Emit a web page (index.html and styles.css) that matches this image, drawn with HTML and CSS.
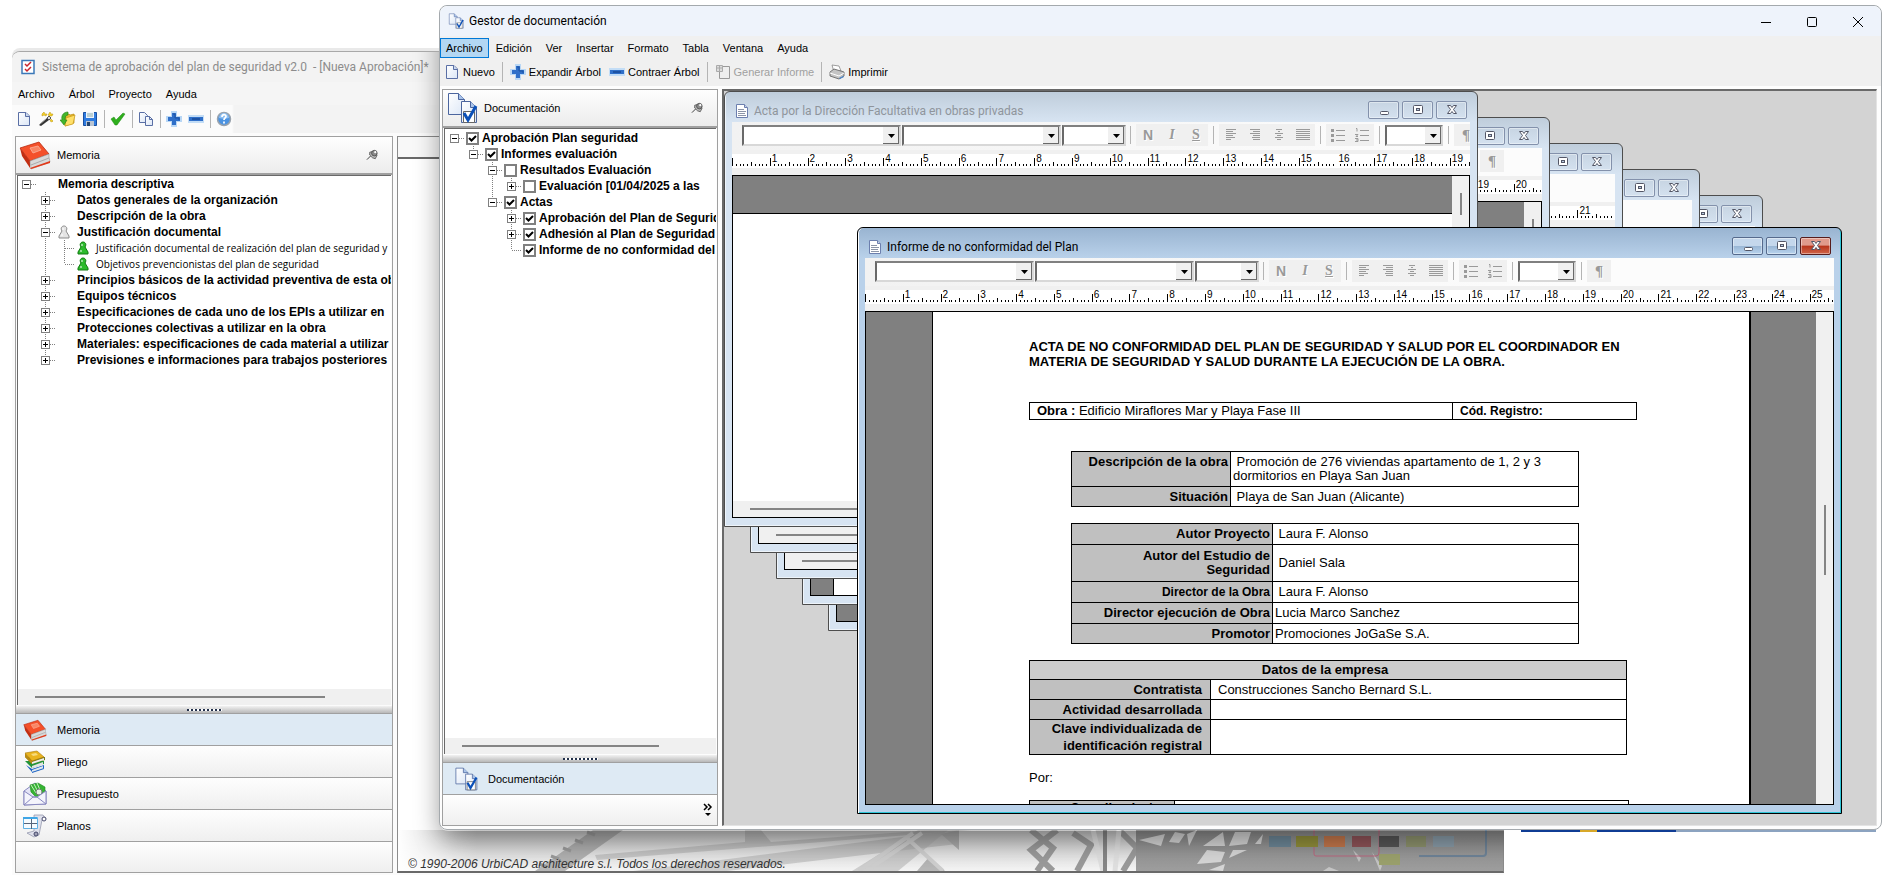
FILE: index.html
```
<!DOCTYPE html>
<html lang="es">
<head>
  <meta charset="UTF-8">
  <meta name="viewport" content="width=device-width, initial-scale=1.0">
  <title>Gestor de documentación</title>
  <link rel="stylesheet" href="styles.css">
</head>
<body>
  <svg class="sprite" aria-hidden="true">
    <defs>
      <linearGradient id="paper" x1="0" y1="0" x2="1" y2="1"><stop offset="0" stop-color="#fff"/><stop offset="1" stop-color="#dbe6f6"/></linearGradient>
      <linearGradient id="fade" x1="0" y1="0" x2="0" y2="1"><stop offset="0" stop-color="#c4c4c4"/><stop offset="1" stop-color="#f4f4f4"/></linearGradient>
      <linearGradient id="side" x1="0" y1="0" x2="1" y2="0"><stop offset="0" stop-color="#fff"/><stop offset="1" stop-color="#fff" stop-opacity="0"/></linearGradient>
      <linearGradient id="dark" x1="0" y1="0" x2="0" y2="1"><stop offset="0" stop-color="#8a8a8a"/><stop offset="1" stop-color="#9d9d9d"/></linearGradient>
    </defs>
    <symbol id="i-new" viewBox="0 0 16 16"><path d="M2.500 1.500h7.500l3.500 3.500v9.500h-11z" fill="url(#paper)" stroke="#5a6fa5"/><path d="M9.500 1.500v4h4" fill="#c9d8f0" stroke="#5a6fa5"/></symbol>
    <symbol id="i-wand" viewBox="0 0 16 16"><path d="M1 14l8-7 2 2-8 6z" fill="#333"/><path d="M2 13l6-5" stroke="#999"/><path d="M9 7l2-2 2 2-2 2z" fill="#ddd" stroke="#555"/><path d="M6 1l1 2 2 0-1 2-2-1-2 1 0-2zM12 1l1 2 2 0-1 2-2 0-2-1zM13 8l1 1 1 1-1 1-2-1z" fill="#f5d32a" stroke="#b98f0c" stroke-width=".5"/></symbol>
    <symbol id="i-open" viewBox="0 0 16 16"><path d="M5 4l4-1 1 1 4-1v9l-9 3z" fill="#e9b92c" stroke="#b98a10" stroke-width=".7"/><path d="M6 7l9-3-2 9-8 2z" fill="#ffe06a" stroke="#c79a1b" stroke-width=".7"/><path d="M8 1C3 1 1 5 2 9L0 9l4 5 3-5H5C5 6 6 4 8 4z" fill="#43b52b" stroke="#23810f" stroke-width=".6"/></symbol>
    <symbol id="i-save" viewBox="0 0 16 16"><path d="M1.500 1.500h13v13h-13z" fill="#2e7be0" stroke="#1a4fa0"/><path d="M4 1h8v6H4z" fill="#eef4fc"/><path d="M5 3h6M5 5h6" stroke="#8aa"/><path d="M4 10h8v5H4z" fill="#b9c4d2"/><path d="M5 11h3v4H5z" fill="#24446f"/></symbol>
    <symbol id="i-ok" viewBox="0 0 16 16"><path d="M1 8l3-2 2 3 7-7 2 1-8 11H5z" fill="#2fae1e" stroke="#1d8a10" stroke-width=".5"/></symbol>
    <symbol id="i-copy" viewBox="0 0 16 16"><path d="M1.500 1.500h5l3 3v7h-8z" fill="url(#paper)" stroke="#5a6fa5"/><path d="M7.500 5.500h4l3 3v6h-7z" fill="url(#paper)" stroke="#5a6fa5"/><path d="M11.500 5.500v3h3" fill="none" stroke="#5a6fa5"/></symbol>
    <symbol id="i-plus" viewBox="0 0 16 16"><path d="M5 0h6v5h5v6h-5v5H5v-5H0V5h5z" fill="#b9d7f5"/><path d="M6 2h4v4h4v4h-4v4H6v-4H2V6h4z" fill="#2f6fc9"/><path d="M7 3h2v4h4v2" fill="none" stroke="#1d52a3"/></symbol>
    <symbol id="i-minus" viewBox="0 0 16 16"><path d="M0 4h16v8H0z" fill="#c3ddf6"/><path d="M1 6h14v4H1z" fill="#2f6fc9"/><path d="M4 8h8" stroke="#1d52a3" stroke-width="2"/></symbol>
    <symbol id="i-help" viewBox="0 0 16 16"><circle cx="8" cy="8" r="6.500" fill="#4b93e2" stroke="#9aa3ad" stroke-width="1.500"/><path d="M3 7a5 5 0 0 1 10 0c-3 1-7 1-10 0z" fill="#8fc0f2"/><path d="M6 6c0-3 4-3 4-.6C10 7 8 7 8 9M8 10.500v2" stroke="#fff" stroke-width="1.700" fill="none"/></symbol>
    <symbol id="i-app" viewBox="0 0 16 16"><path d="M2 1.500h12v13H2z" fill="#fff" stroke="#3b78b8" stroke-width="1.500"/><path d="M5 5l2 2 4-4M5 10l2 2 4-4" stroke="#c9252b" stroke-width="1.500" fill="none"/></symbol>
    <symbol id="i-docs" viewBox="0 0 32 32"><path d="M2.500 1.500h10l6 6v15h-16z" fill="url(#paper)" stroke="#4b659e"/><path d="M12.500 1.500v6h6" fill="#aac4ea" stroke="#4b659e"/><path d="M15.500 9.500h9l6 6v15h-15z" fill="url(#paper)" stroke="#4b659e"/><path d="M24.500 9.500v6h6" fill="#aac4ea" stroke="#4b659e"/><path d="M17.500 19.500h11v11h-11z" fill="#fff" stroke="#666"/><path d="M18 21l4 7 8-14" fill="none" stroke="#0b50b8" stroke-width="3"/></symbol>
    <symbol id="i-book" viewBox="0 0 32 32"><path d="M1 9l19-6 10 12-19 7z" fill="#f4502a" stroke="#b82a10" stroke-width=".8"/><path d="M1 9l10 13v7L3 17z" fill="#c22e12"/><path d="M11 22l19-7v3l1 5-19 7z" fill="#d9d9d9" stroke="#999" stroke-width=".6"/><path d="M12 26l18-7" stroke="#aaa"/><path d="M11 29l20-7v2l-19 6z" fill="#e23a1a"/><path d="M11 9l8-2 3 4-8 3z" fill="#f98564" stroke="#fbb19c" stroke-width=".8"/></symbol>
    <symbol id="i-books" viewBox="0 0 24 24"><path d="M3 15l6 7 12-4v-3L9 19z" fill="#1b63c4"/><path d="M9 20l11-4v3L9 22z" fill="#dfe6ee"/><path d="M9 22l12-4v1L9 23z" fill="#1b63c4"/><path d="M2 11l7 7 12-4v-3z" fill="#23943a"/><path d="M9 16l11-4v3L9 18z" fill="#e4e4e4"/><path d="M2 7l7 7 13-4V7z" fill="#7d7a1c"/><path d="M9 12l12-4v2L9 14z" fill="#eee"/><path d="M2 3l12-2 7 6-12 4z" fill="#eab41f" stroke="#a97a0a" stroke-width=".6"/><path d="M2 3l7 8v3L2 7z" fill="#b98a10"/><path d="M8 4l5-1 2 2-5 1z" fill="#f8dc7c"/></symbol>
    <symbol id="i-mail" viewBox="0 0 24 24"><path d="M1 9l11-8 11 8v13L1 23z" fill="#e4e4f6" stroke="#8888c0"/><path d="M7 3l8-2 7 4v6l-8 5-6-6z" fill="#35b332" stroke="#1c8a1c" stroke-width=".6"/><path d="M8 3l5 8M11 2l4 8M14 1l3 7" stroke="#c9f0c4"/><circle cx="16" cy="10" r="3" fill="#e8f5e6" stroke="#777"/><path d="M1 9l9 6h4l9-6v13L1 23z" fill="#f4f4fc" stroke="#8888c0"/><path d="M1 23l9-8h4l9 7" stroke="#8888c0" fill="none"/></symbol>
    <symbol id="i-plan" viewBox="0 0 24 24"><path d="M11 1l9 0 3 4-4 1-3 15-5 2-7-4 7-2z" fill="#dfe1ec" stroke="#8d90a8" stroke-width=".7"/><path d="M.5 3.500h14v11H.5z" fill="#f5fbff" stroke="#5fb0e4"/><path d="M0 3h14v2H0z" fill="#3fa6e6"/><path d="M8.500 5v10M1 9.500h13M6 9.500h5" stroke="#56657a"/><circle cx="21" cy="5" r="2" fill="#fff" stroke="#44476a"/><circle cx="13" cy="20" r="2" fill="#9ea0b5" stroke="#44476a"/></symbol>
    <symbol id="i-pin" viewBox="0 0 14 12"><path d="M1 11l4-4" stroke="#333"/><path d="M4 3l4-1 4 4-2 4-3-1-3-3z" fill="#bbb" stroke="#444" stroke-width=".8"/><circle cx="9" cy="4" r="3" fill="#8c8c8c" stroke="#444" stroke-width=".8"/><circle cx="10" cy="3" r="1.200" fill="#fff"/></symbol>
    <symbol id="i-pawn" viewBox="0 0 12 14"><path d="M4 6C2 3 4 1 6 1s4 2 2 5l3 5v2H1v-2z" fill="var(--pawn)" stroke="var(--edge)" stroke-width="1"/><path d="M5 3v2M4 9v2" stroke="#fff"/></symbol>
    <symbol id="i-report" viewBox="0 0 16 16"><path d="M4.500 2.500h10v12h-10z" fill="#eee" stroke="#999"/><path d="M1.500 1.500h6v6h-6z" fill="#ddd" stroke="#aaa"/><path d="M2 4h5M4.500 2v5" stroke="#aaa"/></symbol>
    <symbol id="i-print" viewBox="0 0 16 16"><path d="M3 1l7 1 2 5-7 1z" fill="#fff" stroke="#888" stroke-width=".8"/><path d="M1 8l4-3 10 3v4l-5 3-9-3z" fill="#c4c4c4" stroke="#5a5a5a" stroke-width=".8"/><path d="M1 9l9 3 5-3" fill="none" stroke="#fff"/><path d="M10 14l4-2 1 1-4 2z" fill="#4d86c9"/></symbol>
    <symbol id="i-page" viewBox="0 0 14 16"><path d="M1.500 1.500h8l3 3v10h-11z" fill="#fff" stroke="#6c7fae"/><path d="M9.500 1.500v3h3" fill="#c9d4ea" stroke="#6c7fae"/><path d="M3 6.500h6M3 8.500h8M3 10.500h7M3 12.500h8" stroke="#8c95a8"/></symbol>
    <symbol id="i-left" viewBox="0 0 14 14"><path d="M2 1.500h10M2 3.500h7M2 5.500h10M2 7.500h7M2 9.500h9M2 11.500h5" stroke="#9a9a9a"/></symbol>
    <symbol id="i-right" viewBox="0 0 14 14"><path d="M2 1.500h10M5 3.500h7M2 5.500h10M5 7.500h7M4 9.500h8M5 11.500h7" stroke="#9a9a9a"/></symbol>
    <symbol id="i-center" viewBox="0 0 14 14"><path d="M4 1.500h6M6 3.500h2M3 5.500h8M5 7.500h4M3 9.500h8M5 11.500h4" stroke="#9a9a9a"/></symbol>
    <symbol id="i-full" viewBox="0 0 14 14"><path d="M0 1.500h14M0 3.500h14M0 5.500h14M0 7.500h14M0 9.500h14M0 11.500h14" stroke="#9a9a9a"/></symbol>
    <symbol id="i-bullets" viewBox="0 0 14 14"><path d="M0 1h3v3H0zM0 6h3v3H0zM0 11h3v3H0z" fill="#9a9a9a"/><path d="M5 2.500h9M5 7.500h9M5 12.500h9" stroke="#9a9a9a"/></symbol>
    <symbol id="i-numbers" viewBox="0 0 14 14"><path d="M1 .5h1v3M0 6.500h3l-2 2h2M0 10.500h3v3H0M1 12h2" fill="none" stroke="#9a9a9a"/><path d="M5 2.500h9M5 7.500h9M5 12.500h9" stroke="#9a9a9a"/></symbol>
    <symbol id="i-min" viewBox="0 0 12 12"><rect x="2.500" y="7.500" width="8" height="3" rx="1" fill="#fff" stroke="#535666"/></symbol>
    <symbol id="i-max" viewBox="0 0 12 12"><rect x="1.500" y="1.500" width="9" height="8" rx="1" fill="#fff" stroke="#535666"/><rect x="4.500" y="4.500" width="3" height="2" fill="#b9cbe0" stroke="#535666"/></symbol>
    <symbol id="i-close" viewBox="0 0 12 12"><path d="M1.500 1.500h3l1.500 2 1.500-2h3l-3 4 3 4h-3l-1.500-2-1.500 2h-3l3-4z" fill="#fff" stroke="#535666"/></symbol>
  </svg>

  <!-- main application -->
  <section class="app-window" aria-label="Sistema de aprobación">
    <header class="app-title">
      <svg class="icon"><use href="#i-app"/></svg>
      <span>Sistema de aprobación del plan de seguridad v2.0 &nbsp;- [Nueva Aprobación]*</span>
    </header>
    <nav class="menu app-menu">
      <button>Archivo</button><button>Árbol</button><button>Proyecto</button><button>Ayuda</button>
    </nav>
    <div class="tools app-tools">
      <button aria-label="Nuevo"><svg class="icon"><use href="#i-new"/></svg></button>
      <button aria-label="Asistente"><svg class="icon"><use href="#i-wand"/></svg></button>
      <button aria-label="Abrir"><svg class="icon"><use href="#i-open"/></svg></button>
      <button aria-label="Guardar"><svg class="icon"><use href="#i-save"/></svg></button>
      <i class="sep"></i>
      <button aria-label="Validar"><svg class="icon"><use href="#i-ok"/></svg></button>
      <i class="sep"></i>
      <button aria-label="Copiar"><svg class="icon"><use href="#i-copy"/></svg></button>
      <i class="sep"></i>
      <button aria-label="Expandir"><svg class="icon"><use href="#i-plus"/></svg></button>
      <button aria-label="Contraer"><svg class="icon"><use href="#i-minus"/></svg></button>
      <i class="sep"></i>
      <button aria-label="Ayuda"><svg class="icon"><use href="#i-help"/></svg></button>
    </div>
    <div class="app-body">
      <aside class="panel app-panel">
        <div class="panel-head">
          <svg class="icon-big"><use href="#i-book"/></svg><span>Memoria</span>
          <button class="pin" aria-label="Fijar"><svg><use href="#i-pin"/></svg></button>
        </div>
        <div class="tree-box">
          <ul class="tree tree-memo">
            <li><div class="row bold"><button class="exp open" aria-label="Contraer"></button><i class="dots"></i><i class="slot"></i>Memoria descriptiva</div>
              <ul>
                <li><div class="row bold"><button class="exp" aria-label="Expandir"></button><i class="dots"></i><i class="slot"></i>Datos generales de la organización</div></li>
                <li><div class="row bold"><button class="exp" aria-label="Expandir"></button><i class="dots"></i><i class="slot"></i>Descripción de la obra</div></li>
                <li><div class="row bold"><button class="exp open" aria-label="Contraer"></button><i class="dots"></i><i class="slot"><svg class="pawn"><use href="#i-pawn"/></svg></i>Justificación documental</div>
                  <ul>
                    <li><div class="row leaf-row"><i class="leaf"></i><i class="slot"><svg class="pawn green"><use href="#i-pawn"/></svg></i>Justificación documental de realización del plan de seguridad y</div></li>
                    <li><div class="row leaf-row"><i class="leaf"></i><i class="slot"><svg class="pawn green"><use href="#i-pawn"/></svg></i>Objetivos prevencionistas del plan de seguridad</div></li>
                  </ul>
                </li>
                <li><div class="row bold"><button class="exp" aria-label="Expandir"></button><i class="dots"></i><i class="slot"></i>Principios básicos de la actividad preventiva de esta obra</div></li>
                <li><div class="row bold"><button class="exp" aria-label="Expandir"></button><i class="dots"></i><i class="slot"></i>Equipos técnicos</div></li>
                <li><div class="row bold"><button class="exp" aria-label="Expandir"></button><i class="dots"></i><i class="slot"></i>Especificaciones de cada uno de los EPIs a utilizar en</div></li>
                <li><div class="row bold"><button class="exp" aria-label="Expandir"></button><i class="dots"></i><i class="slot"></i>Protecciones colectivas a utilizar en la obra</div></li>
                <li><div class="row bold"><button class="exp" aria-label="Expandir"></button><i class="dots"></i><i class="slot"></i>Materiales: especificaciones de cada material a utilizar</div></li>
                <li><div class="row bold"><button class="exp" aria-label="Expandir"></button><i class="dots"></i><i class="slot"></i>Previsiones e informaciones para trabajos posteriores</div></li>
              </ul>
            </li>
          </ul>
          <div class="hscroll"><i class="thumb-memo"></i></div>
        </div>
        <div class="splitter"><i></i></div>
        <button class="stack-item current"><svg class="icon-mid"><use href="#i-book"/></svg>Memoria</button>
        <button class="stack-item"><svg class="icon-mid"><use href="#i-books"/></svg>Pliego</button>
        <button class="stack-item"><svg class="icon-mid"><use href="#i-mail"/></svg>Presupuesto</button>
        <button class="stack-item"><svg class="icon-mid"><use href="#i-plan"/></svg>Planos</button>
        <div class="stack-foot"></div>
      </aside>
      <main class="canvas">
        <div class="canvas-head"></div>
        <div class="canvas-photo">
          <svg class="bridge" viewBox="0 0 1106 41" preserveAspectRatio="xMaxYMin slice" aria-hidden="true">
            <rect width="1106" height="41" fill="url(#fade)"/>
            <g fill="#8f8f8f" opacity=".6">
              <path d="M138 41L196 0h30L168 41z"/>
              <path d="M348 0h16l10 12 160-12h40L200 30l-2-5 150-13z" opacity=".6"/>
              <path d="M236 41L560 0v14L330 41z" opacity=".6"/>
              <path d="M455 41l66-41h30l-50 41z" opacity=".6"/>
              <path d="M520 41l12-14 16 14zM544 4l18-4v20z"/>
            </g>
            <path d="M142 34l8 3m4-11l8 3m4-11l8 3m4-11l8 3m4-11l8 3" stroke="#999" stroke-width="3"/>
            <path d="M462 41l54-38M510 8l36 33M475 37l50-34" stroke="#cdcdcd" stroke-width="4"/>
            <g stroke="#999" stroke-width="6" fill="none"><path d="M634 0l22 18-16 23M660 0l-26 20 22 21M676 3l18 12-14 26M722 0l18 18-14 23"/></g>
            <path d="M696 0l10 41M722 0l-4 41" stroke="#dedede" stroke-width="5"/>
            <path d="M708 0v41" stroke="#858585" stroke-width="4"/>
            <path d="M739 0h367v41H739z" fill="url(#dark)"/>
            <g fill="#dcdcdc" opacity=".9">
              <path d="M742 10l26-6-4 12zM772 12l6-10 10 2-6 9zM790 4l10-4-8 16zM806 16l20-14 2 14zM832 16l6-14 16 0-4 12zM800 34l10-14 18 2-4 10zM832 28l4-8h14zM812 40l16-6-2 7zM858 14l8-10-2 10z"/>
              <path d="M926 41l6-4 10 4zM956 20l8 8-2 4zM975 22l10 14-2 5z" opacity=".7"/>
            </g>
            <path d="M917 0v24q0 2 2 2h60q3 0 3-3V0" fill="none" stroke="#b7657c"/>
            <path d="M1022 26h64q3 0 3-3V0" fill="none" stroke="#6d8296" stroke-width="2"/>
            <path d="M872 6h22v11h-22z" fill="#6b8595"/><path d="M899 6h22v11h-22z" fill="#8f8d3a"/>
            <path d="M927 6h21v11h-21z" fill="#c1754a"/><path d="M955 6h19v11h-19z" fill="#8d5257"/>
            <path d="M982 6h20v11h-20z" fill="#555"/><path d="M1009 6h20v11h-20z" fill="#8b906b"/>
            <path d="M1036 6h21v11h-21z" fill="#8799a5"/><path d="M982 24h21v11h-21z" fill="#9aa06c"/>
            <rect width="80" height="41" fill="url(#side)"/>
          </svg>
          <p class="copyright">© 1990-2006 UrbiCAD architecture s.l. Todos los derechos reservados.</p>
        </div>
      </main>
    </div>
    <i class="shade"></i>
  </section>
  <i class="desk-strip"></i>

  <!-- document manager -->
  <section class="manager" aria-label="Gestor de documentación">
    <header class="manager-title">
      <svg class="icon"><use href="#i-docs"/></svg>
      <h1>Gestor de documentación</h1>
      <div class="win-buttons">
        <button aria-label="Minimizar"><svg viewBox="0 0 12 12"><path d="M1 6.500h10"/></svg></button>
        <button aria-label="Maximizar"><svg viewBox="0 0 12 12"><rect x="1.500" y="1.500" width="9" height="9" rx="1"/></svg></button>
        <button aria-label="Cerrar"><svg viewBox="0 0 12 12"><path d="M1 1l10 10M11 1L1 11"/></svg></button>
      </div>
    </header>
    <nav class="menu manager-menu">
      <button class="selected">Archivo</button><button>Edición</button><button>Ver</button><button>Insertar</button><button>Formato</button><button>Tabla</button><button>Ventana</button><button>Ayuda</button>
    </nav>
    <div class="tools manager-tools">
      <button><svg class="icon"><use href="#i-new"/></svg>Nuevo</button>
      <i class="sep"></i>
      <button><svg class="icon"><use href="#i-plus"/></svg>Expandir Árbol</button>
      <button><svg class="icon"><use href="#i-minus"/></svg>Contraer Árbol</button>
      <i class="sep"></i>
      <button disabled><svg class="icon"><use href="#i-report"/></svg>Generar Informe</button>
      <i class="sep"></i>
      <button><svg class="icon"><use href="#i-print"/></svg>Imprimir</button>
    </div>
    <div class="manager-body">
      <aside class="panel manager-panel">
        <div class="panel-head">
          <svg class="icon-big"><use href="#i-docs"/></svg><span>Documentación</span>
          <button class="pin" aria-label="Fijar"><svg><use href="#i-pin"/></svg></button>
        </div>
        <div class="tree-box">
          <ul class="tree tree-docs">
            <li><div class="row bold"><button class="exp open" aria-label="Contraer"></button><i class="dots"></i><label><input type="checkbox" checked>Aprobación Plan seguridad</label></div>
              <ul>
                <li><div class="row bold"><button class="exp open" aria-label="Contraer"></button><i class="dots"></i><label><input type="checkbox" checked>Informes evaluación</label></div>
                  <ul>
                    <li><div class="row bold"><button class="exp open" aria-label="Contraer"></button><i class="dots"></i><label><input type="checkbox">Resultados Evaluación</label></div>
                      <ul>
                        <li><div class="row bold"><button class="exp" aria-label="Expandir"></button><i class="dots"></i><label><input type="checkbox">Evaluación [01/04/2025 a las</label></div></li>
                      </ul>
                    </li>
                    <li><div class="row bold"><button class="exp open" aria-label="Contraer"></button><i class="dots"></i><label><input type="checkbox" checked>Actas</label></div>
                      <ul>
                        <li><div class="row bold"><button class="exp" aria-label="Expandir"></button><i class="dots"></i><label><input type="checkbox" checked>Aprobación del Plan de Seguridad</label></div></li>
                        <li><div class="row bold"><button class="exp" aria-label="Expandir"></button><i class="dots"></i><label><input type="checkbox" checked>Adhesión al Plan de Seguridad</label></div></li>
                        <li><div class="row bold"><i class="leaf"></i><label><input type="checkbox" checked>Informe de no conformidad del</label></div></li>
                      </ul>
                    </li>
                  </ul>
                </li>
              </ul>
            </li>
          </ul>
          <div class="hscroll"><i class="thumb-docs"></i></div>
        </div>
        <div class="splitter"><i></i></div>
        <button class="stack-item current"><svg class="icon-mid"><use href="#i-docs"/></svg>Documentación</button>
        <div class="stack-foot"><button class="more" aria-label="Más"><svg viewBox="0 0 10 14"><path d="M1 1l3 3-3 3M5 1l3 3-3 3" fill="none" stroke="#000" stroke-width="1.500"/><path d="M2 10h6l-3 3z"/></svg></button></div>
      </aside>

      <div class="mdi">
        <article class="child child-5">
          <header class="child-title"></header>
          <div class="format-bar"></div>
          <div class="doc"><div class="doc-gray"></div></div>
        </article>
        <article class="child child-4">
          <header class="child-title"></header>
          <div class="format-bar"></div>
          <div class="doc"><div class="margin-thin"></div><div class="doc-white"></div></div>
        </article>
        <article class="child child-3">
          <header class="child-title"></header>
          <div class="format-bar"></div>
          <div class="ruler" data-from="21" data-to="21"></div>
          <div class="doc"><div class="doc-view"><div class="doc-band"></div><div class="doc-white"></div><div class="hscroll"><i></i></div></div><div class="vscroll"><i></i></div></div>
        </article>
        <article class="child child-2">
          <header class="child-title"></header>
          <div class="format-bar has-marks"></div>
          <div class="ruler" data-from="19" data-to="20"></div>
          <div class="doc"><div class="doc-view"><div class="doc-band"></div><div class="doc-white"></div><div class="hscroll"><i></i></div></div><div class="vscroll"><i></i></div></div>
        </article>
        <article class="child child-1">
          <header class="child-title"><svg class="icon-page"><use href="#i-page"/></svg><span>Acta por la Dirección Facultativa en obras privadas</span></header>
          <div class="format-bar has-marks"></div>
          <div class="ruler" data-from="1" data-to="19"></div>
          <div class="doc"><div class="doc-view"><div class="doc-band"></div><div class="doc-white"></div><div class="hscroll"><i></i></div></div><div class="vscroll"><i></i></div></div>
        </article>

        <article class="child child-active">
          <header class="child-title"><svg class="icon-page"><use href="#i-page"/></svg><span>Informe de no conformidad del Plan</span></header>
          <div class="format-bar has-marks"></div>
          <div class="ruler" data-from="1" data-to="25"></div>
          <div class="doc">
            <div class="margin-left"></div>
            <div class="page">
              <h2>ACTA DE NO CONFORMIDAD DEL PLAN DE SEGURIDAD Y SALUD POR EL COORDINADOR EN<br>MATERIA DE SEGURIDAD Y SALUD DURANTE LA EJECUCIÓN DE LA OBRA.</h2>
              <table class="t-obra">
                <tr><td><b>Obra :</b> Edificio Miraflores Mar y Playa Fase III</td><td class="reg"><b>Cód. Registro:</b></td></tr>
              </table>
              <table class="t-desc">
                <tr class="tall"><th>Descripción de la obra</th><td>&nbsp;Promoción de 276 viviendas apartamento de 1, 2 y 3<br>dormitorios en Playa San Juan</td></tr>
                <tr><th>Situación</th><td>&nbsp;Playa de San Juan (Alicante)</td></tr>
              </table>
              <table class="t-autor">
                <tr><th>Autor Proyecto</th><td>&nbsp;Laura F. Alonso</td></tr>
                <tr class="tall"><th>Autor del Estudio de<br>Seguridad</th><td>&nbsp;Daniel Sala</td></tr>
                <tr><th class="small">Director de la Obra</th><td>&nbsp;Laura F. Alonso</td></tr>
                <tr><th>Director ejecución de Obra</th><td>Lucia Marco Sanchez</td></tr>
                <tr class="last"><th>Promotor</th><td>Promociones JoGaSe S.A.</td></tr>
              </table>
              <table class="t-empresa">
                <colgroup><col class="names"><col></colgroup>
                <tr class="first"><th colspan="2" class="caption">Datos de la empresa</th></tr>
                <tr><th>Contratista</th><td>Construcciones Sancho Bernard S.L.</td></tr>
                <tr><th>Actividad desarrollada</th><td></td></tr>
                <tr class="tall"><th>Clave individualizada de<br>identificación registral</th><td></td></tr>
              </table>
              <p>Por:</p>
              <table class="t-firma">
                <tr><th>Coordinador/a</th><td></td></tr>
              </table>
            </div>
            <div class="margin-right"></div>
            <div class="vscroll"><i></i></div>
          </div>
        </article>
      </div>
    </div>
  </section>

  <template id="formatBar">
    <select class="wide" aria-label="Estilo"></select>
    <select class="wide" aria-label="Fuente"></select>
    <select class="narrow" aria-label="Tamaño"></select>
    <i class="sep"></i>
    <div class="group"><button class="n" aria-label="Negrita">N</button><button class="k" aria-label="Cursiva">I</button><button class="s" aria-label="Subrayado">S</button></div>
    <i class="sep"></i>
    <div class="group">
      <button aria-label="Izquierda"><svg><use href="#i-left"/></svg></button>
      <button aria-label="Derecha"><svg><use href="#i-right"/></svg></button>
      <button aria-label="Centrar"><svg><use href="#i-center"/></svg></button>
      <button aria-label="Justificar"><svg><use href="#i-full"/></svg></button>
    </div>
    <i class="sep"></i>
    <div class="group">
      <button aria-label="Viñetas"><svg><use href="#i-bullets"/></svg></button>
      <button aria-label="Numeración"><svg><use href="#i-numbers"/></svg></button>
    </div>
    <i class="sep"></i>
    <select class="zoom" aria-label="Zoom"></select>
    <i class="sep"></i>
    <div class="group"><button class="p" aria-label="Marcas de párrafo">¶</button></div>
  </template>
  <template id="childButtons">
    <div class="child-buttons">
      <button aria-label="Minimizar"><svg><use href="#i-min"/></svg></button>
      <button aria-label="Maximizar"><svg><use href="#i-max"/></svg></button>
      <button class="x" aria-label="Cerrar"><svg><use href="#i-close"/></svg></button>
    </div>
  </template>
  <script src="script.js"></script>
</body>
</html>
```
FILE: styles.css
```
* {
  box-sizing: border-box;
}

html, body {
  height: 100%;
}

body {
  margin: 0;
  position: relative;
  overflow: hidden;
  background: #fff;
  color: #000;
  font: 11px/16px "Liberation Sans", Arial, sans-serif;
}

button {
  font: inherit;
  color: inherit;
  background: none;
  border: 0;
  padding: 0;
  white-space: nowrap;
}

ul {
  list-style: none;
  margin: 0;
  padding: 0;
}

.sprite { position: absolute; width: 0; height: 0; }
.icon { width: 16px; height: 16px; flex: none; }
.icon-mid { width: 24px; height: 24px; flex: none; }
.icon-big { width: 32px; height: 32px; flex: none; }
.icon-page { width: 14px; height: 16px; flex: none; }

/* ---- main application ---- */
.app-window {
  position: absolute;
  inset: 51px 382px 3px 12px;
  display: flex;
  flex-direction: column;
  overflow: hidden;
  background: #fbfbfb;
  border-top: 1px solid #a8a8a8;
  border-radius: 8px 0 0 0;
  box-shadow: 0 -3px 0 #e9e9e9;
}

/* shadow that the manager window throws on the application */
.shade {
  position: absolute;
  inset: -40px -100px 44px 428px;
  border-radius: 8px;
  box-shadow: 0 8px 26px rgba(0,0,0,0.4);
}

.app-title {
  display: flex;
  align-items: center;
  gap: 6px;
  height: 30px;
  padding-left: 8px;
  background: #f3f3f3;
  border-radius: 8px 0 0 0;
  color: #8c8c8c;
  font: 12px/16px Roboto, sans-serif;
}

.menu {
  display: flex;
  align-items: center;
}
.menu button {
  height: 20px;
  padding: 0 6px;
  border: 1px solid transparent;
}
.menu .selected {
  background: #b3d7f3;
  border-color: #0078d7;
  padding: 0 5px;
}

.app-menu {
  height: 23px;
  background: #f5f5f5;
}
.app-menu button:first-child { padding-left: 5px; }

.tools {
  display: flex;
  align-items: center;
}
.tools button {
  display: flex;
  align-items: center;
  gap: 3px;
}
.tools button:disabled { color: #a0a0a0; }

.sep {
  flex: none;
  width: 1px;
  height: 18px;
  margin: 0 5px;
  background: #b4b4b4;
}

.app-tools {
  gap: 6px;
  height: 28px;
  padding: 0 0 1px 4px;
  background: linear-gradient(90deg, #fbfbfb 220px, #f3f3f3 222px);
}
.app-tools .sep { margin: 0 -1px 0 0; }

.app-body {
  flex: 1;
  display: flex;
  gap: 4px;
  min-height: 0;
  padding: 3px 0 2px 3px;
}

.panel {
  display: flex;
  flex-direction: column;
  flex: none;
  border: 1px solid #a0a0a0;
}
.app-panel { width: 378px; }

.panel-head {
  display: flex;
  align-items: center;
  gap: 6px;
  height: 38px;
  padding: 0 13px 0 3px;
  background: linear-gradient(#fefefe, #ececec);
  border-bottom: 2px solid #a0a0a0;
}
.pin { margin-left: auto; }
.pin svg { display: block; width: 13px; height: 12px; }

.tree-box {
  flex: 1;
  display: flex;
  flex-direction: column;
  min-height: 0;
  margin: 0 1px 1px;
  background: #fff;
  border-left: 1px solid #696969;
  border-top: 1px solid #696969;
}
.tree {
  flex: 1;
  min-height: 0;
  overflow: hidden;
  white-space: nowrap;
}
.tree-memo { padding-left: 4px; }
.tree-docs { padding: 1px 0 0 5px; }

.tree ul { padding-left: 19px; }

/* dotted guide running down through the siblings */
.tree li li {
  background: repeating-linear-gradient(#808080 0 1px, transparent 1px 2px) 4px 0 / 1px 100% no-repeat;
}
.tree li li:last-child { background-size: 1px 8px; }

.row {
  display: flex;
  align-items: center;
  height: 16px;
}
.bold { font-weight: bold; font-size: 12px; }
.leaf-row { font-family: "Open Sans", sans-serif; font-size: 10px; }

.exp {
  flex: none;
  width: 9px;
  height: 9px;
  border: 1px solid #808080;
  background:
    linear-gradient(#000, #000) 1px 3px / 5px 1px no-repeat,
    linear-gradient(#000, #000) 3px 1px / 1px 5px no-repeat,
    #fff;
}
.exp.open {
  background: linear-gradient(#000, #000) 1px 3px / 5px 1px no-repeat, #fff;
}

.dots, .leaf {
  flex: none;
  height: 1px;
  background: repeating-linear-gradient(90deg, #808080 0 1px, transparent 1px 2px);
}
.dots { width: 6px; margin-right: 2px; }
.leaf { width: 10px; margin: 0 2px 0 5px; }

.slot {
  display: flex;
  flex: none;
  width: 19px;
}
.pawn {
  --pawn: #e4e4e4;
  --edge: #8a8a8a;
  width: 12px;
  height: 14px;
}
.pawn.green {
  --pawn: #2dbb2d;
  --edge: #127a12;
}

.tree label {
  display: flex;
  align-items: center;
  gap: 3px;
}
.tree-docs .dots { width: 5px; }
.tree-docs .leaf { width: 9px; }
.tree input {
  appearance: none;
  flex: none;
  width: 13px;
  height: 13px;
  margin: 0;
  border: 2px solid #808080;
  background: #fff;
}
.tree input:checked {
  background: #fff url("data:image/svg+xml,%3Csvg xmlns='http://www.w3.org/2000/svg' viewBox='0 0 9 9'%3E%3Cpath d='M1 4l2.500 2.500L8 2' fill='none' stroke='%23000' stroke-width='2'/%3E%3C/svg%3E") center / 9px 9px;
}

.hscroll {
  flex: none;
  display: flex;
  align-items: center;
  height: 16px;
  padding-left: 17px;
  background: #f0f0f0;
}
.hscroll i { height: 2px; width: 80%; background: #858585; }
.hscroll .thumb-memo { width: 290px; }
.hscroll .thumb-docs { width: 197px; }

.splitter {
  display: flex;
  align-items: center;
  justify-content: center;
  height: 8px;
  background: linear-gradient(#f2f2f2, #b8b8b8);
  border-bottom: 1px solid #a0a0a0;
}
.splitter i {
  width: 35px;
  height: 2px;
  background: repeating-linear-gradient(90deg, #22304a 0 2px, #fff 2px 4px);
}

.stack-item {
  display: flex;
  align-items: center;
  gap: 10px;
  height: 32px;
  padding-left: 7px;
  background: linear-gradient(#fefefe, #efefef);
  border-bottom: 1px solid #a0a0a0;
}
.stack-item.current { background: #deeaf4; }
.manager-panel .stack-item { padding-left: 11px; }
.stack-foot {
  display: flex;
  align-items: center;
  justify-content: flex-end;
  height: 30px;
  padding-right: 4px;
  background: linear-gradient(#fefefe, #efefef);
}
.more svg { display: block; width: 10px; height: 14px; }

.canvas {
  flex: 1;
  display: flex;
  flex-direction: column;
  border: 1px solid #8c8c8c;
  border-bottom: 2px solid #696969;
  background: #fff;
}
.canvas-head {
  height: 22px;
  background: #f8f8f8;
  border-bottom: 2px solid #696969;
}
.canvas-photo {
  flex: 1;
  display: flex;
  flex-direction: column;
  justify-content: flex-end;
  min-height: 0;
}
.bridge { display: block; width: 100%; height: 41px; }
.copyright {
  height: 14px;
  margin: -14px 0 0 10px;
  position: relative;
  color: #333;
  font-style: italic;
  font-size: 12px;
  line-height: 14px;
}

/* colours showing along the bottom edge, right of the application */
.desk-strip {
  position: absolute;
  inset: auto 10px 46px 1521px;
  height: 3px;
  background: linear-gradient(90deg, #0f3c94 0 59px, #d8a829 59px 76px, #0f3c94 76px 155px, #8ca3c0 155px);
}

/* ---- document manager ---- */
.manager {
  position: absolute;
  inset: 5px 4px 48px 439px;
  display: flex;
  flex-direction: column;
  background: #fdfdfd;
  border: 1px solid #a4a9ad;
  border-radius: 8px;
}

.manager-title {
  display: flex;
  align-items: center;
  gap: 5px;
  height: 30px;
  padding-left: 8px;
  background: #eef3fb;
  border-radius: 8px 8px 0 0;
}
.manager-title h1 {
  margin: 0;
  font: 12px/16px Roboto, sans-serif;
}
.win-buttons {
  display: flex;
  margin-left: auto;
}
.win-buttons button { width: 46px; height: 30px; }
.win-buttons svg {
  width: 12px;
  height: 12px;
  fill: none;
  stroke: #000;
  vertical-align: middle;
}

.manager-menu {
  height: 23px;
  background: #f0f0f0;
}
.manager-tools {
  height: 27px;
  gap: 8px;
  padding: 0 0 1px 4px;
  background: #f0f0f0;
}
.manager-tools .sep { height: 20px; margin: 0 -1px; }

.manager-body {
  flex: 1;
  display: flex;
  gap: 4px;
  min-height: 0;
  padding: 3px 4px 3px 2px;
}
.manager-panel { width: 276px; }

.mdi {
  flex: 1;
  position: relative;
  overflow: hidden;
  background: #d3d3d3;
  border: solid;
  border-width: 2px 1px 1px 2px;
  border-color: #696969 #e3e3e3 #e3e3e3 #696969;
}

.child {
  position: absolute;
  display: flex;
  flex-direction: column;
  padding: 0 7px 8px;
  border: 1px solid #4d4d4d;
  border-radius: 6px 6px 0 0;
  background: linear-gradient(#bfcddb, #d7e4f2 30px);
  box-shadow: inset 1px -1px 0 #eef4fa;
}
.child-1 { left: 0; top: 0; width: 754px; height: 436px; }
.child-2 { left: 26px; top: 26px; width: 800px; height: 436px; }
.child-3 { left: 52px; top: 52px; width: 847px; height: 436px; }
.child-4 { left: 78px; top: 78px; width: 898px; height: 436px; }
.child-5 { left: 104px; top: 104px; width: 935px; height: 436px; }
.child-active {
  inset: 136px 34px 11px 133px;
  border-color: #000;
  background: linear-gradient(#99b4d1, #b9d1ea 30px);
  box-shadow: inset 1px 0 0 #fff, inset -1px -1px 0 #2fc6d8;
}

.child-title {
  flex: none;
  display: flex;
  align-items: center;
  gap: 5px;
  height: 30px;
  padding: 8px 0 0 3px;
  color: #8f959c;
  font: 12px/16px Roboto, sans-serif;
}
.child-active .child-title { color: #000; }

.child-buttons {
  display: flex;
  gap: 3px;
  margin: -3px 3px 0 auto;
}
.child-buttons button {
  width: 31px;
  height: 18px;
  border: 1px solid #8391ab;
  border-radius: 2px;
  box-shadow: inset 0 0 0 1px rgba(255,255,255,0.4);
}
.child-buttons svg { display: block; width: 12px; height: 12px; margin: auto; }
.child-active .child-buttons button {
  border-color: #566a8c;
  background: linear-gradient(#c4d7ec 50%, #98b5d4 50%, #b9d4ee);
}
.child-active .child-buttons .x {
  border-color: #571c1c;
  background: linear-gradient(#e09a8c 45%, #b8341b 50%, #d0654a);
}

.format-bar {
  flex: none;
  display: flex;
  align-items: center;
  height: 28px;
  padding: 0 0 2px 10px;
  overflow: hidden;
  background: linear-gradient(90deg, #f2f2f2, #fcfcfc 700px);
}
.format-bar select {
  appearance: none;
  flex: none;
  height: 21px;
  margin: 0 1px 0 0;
  padding: 0;
  border: 2px solid;
  border-color: #808080 #d8d8d8 #d8d8d8 #696969;
  border-radius: 0;
  background: #fff url("data:image/svg+xml,%3Csvg xmlns='http://www.w3.org/2000/svg' viewBox='0 0 16 17'%3E%3Cpath d='M0 0h16v17H0z' fill='%23696969'/%3E%3Cpath d='M0 0h15v16H0z' fill='%23f0f0f0'/%3E%3Cpath d='M5 7h7l-3.500 4z'/%3E%3C/svg%3E") right center / 16px 17px no-repeat;
}
.format-bar .wide { width: 159px; }
.format-bar .narrow { width: 64px; margin: 0 -1px 0 0; }
.format-bar .zoom { width: 58px; margin: 0; }

.group {
  flex: none;
  display: flex;
  height: 22px;
  background: #f0f0f0;
}
.group button { width: 24px; color: #999; text-shadow: 1px 1px 0 #fff; }
.group svg { display: block; width: 14px; height: 14px; margin: auto; }
.group .n { font: bold 14px "Liberation Sans", sans-serif; }
.group .k { font: italic bold 14px "Liberation Serif", serif; }
.group .s { font: bold 14px "Liberation Serif", serif; text-decoration: underline; }
.group .p { font: bold 15px "Liberation Serif", serif; }

.ruler {
  flex: none;
  display: flex;
  height: 25px;
  overflow: hidden;
  border: solid #f0f0f0;
  border-width: 4px 0 7px;
  background: #fff url("data:image/svg+xml,%3Csvg xmlns='http://www.w3.org/2000/svg' width='38' height='14' viewBox='0 0 38 14'%3E%3Cpath d='M0 4h1v8h-1zM19 8h1v4h-1zM4 10h1v2h-1zM8 10h1v2h-1zM11 10h1v2h-1zM15 10h1v2h-1zM23 10h1v2h-1zM27 10h1v2h-1zM30 10h1v2h-1zM34 10h1v2h-1z'/%3E%3C/svg%3E") 0 0 / 1cm 14px repeat-x;
}
.ruler span {
  flex: none;
  width: 1cm;
  padding-left: 2px;
  font-size: 10px;
  line-height: 9px;
}

.doc {
  flex: 1;
  display: flex;
  min-height: 0;
  overflow: hidden;
  border: 1px solid #000;
}
.doc-view { flex: 1; display: flex; flex-direction: column; }
.doc-band { height: 38px; background: #808080; border-bottom: 1px solid #000; }
.doc-white { flex: 1; background: #fff; }
.doc-gray { flex: 1; background: #808080; }
.margin-thin { width: 23px; background: #808080; border-right: 1px solid #000; }

.vscroll {
  flex: none;
  width: 17px;
  background: #f0f0f0;
}
.vscroll i {
  display: block;
  width: 2px;
  height: 22px;
  margin: 17px auto 0;
  background: #858585;
}
.child-active .vscroll i { height: 70px; margin-top: 193px; }

.margin-left { flex: none; width: 67px; background: #808080; border-right: 1px solid #000; }
.margin-right { flex: none; width: 67px; background: #808080; border-left: 2px solid #000; }

/* ---- document ---- */
.page {
  flex: 1;
  padding: 27px 0 0 96px;
  background: #fff;
  font-size: 13px;
  line-height: 15px;
}
.page h2 { margin: 0 0 33px; font-size: 13px; line-height: 15px; white-space: nowrap; }
.page p { margin: 15px 0; }

.page table {
  border-collapse: collapse;
  table-layout: fixed;
  line-height: 14px;
}
.page th, .page td {
  border: 1px solid #000;
  padding: 0 2px;
  text-align: left;
}
.page th { background: #c0c0c0; text-align: right; }
.page tr { height: 21px; }

.page .t-obra { width: 608px; }
.t-obra tr { height: 17px; }
.page .t-obra td { padding: 0 7px; }
.page .t-obra .reg { width: 184px; font-size: 12px; }

.page .t-desc { width: 508px; margin: 31px 0 0 42px; }
.t-desc th { width: 159px; }
.page .t-desc tr { height: 20px; }
.page .t-desc .tall { height: 35px; }
.t-desc .tall th, .t-desc .tall td { vertical-align: top; padding-top: 3px; }

.page .t-autor { width: 508px; margin: 16px 0 0 42px; }
.t-autor th { width: 201px; }
.page .t-autor .tall { height: 37px; }
.page .t-autor .last { height: 20px; }
.page .small { font-size: 12px; }

.page .t-empresa { width: 598px; margin-top: 16px; }
.t-empresa .names { width: 181px; }
.page .t-empresa tr { height: 20px; }
.page .t-empresa .first { height: 19px; }
.page .t-empresa .tall { height: 35px; line-height: 17px; }
.page .t-empresa th { padding-right: 8px; }
.page .t-empresa td { padding-left: 7px; }
.page .t-empresa .caption { background: #ccc; text-align: center; }

.page .t-firma { width: 600px; }
.t-firma th { width: 145px; }
.page .t-firma tr { height: 18px; }
.page .t-firma th { padding-right: 15px; line-height: 14px; vertical-align: top; }
```
FILE: script.js
```
const formatBar = document.getElementById('formatBar');
const childButtons = document.getElementById('childButtons');

document.querySelectorAll('.format-bar.has-marks').forEach((bar) => {
  bar.append(formatBar.content.cloneNode(true));
});

document.querySelectorAll('.child-title').forEach((title) => {
  title.append(childButtons.content.cloneNode(true));
});

// one cell per centimetre, numbered only inside the given range
document.querySelectorAll('.ruler').forEach((ruler) => {
  const { from, to } = ruler.dataset;
  for (let cm = 0; cm <= Number(to); cm++) {
    const cell = document.createElement('span');
    if (cm >= Number(from)) cell.textContent = cm;
    ruler.append(cell);
  }
});
```
